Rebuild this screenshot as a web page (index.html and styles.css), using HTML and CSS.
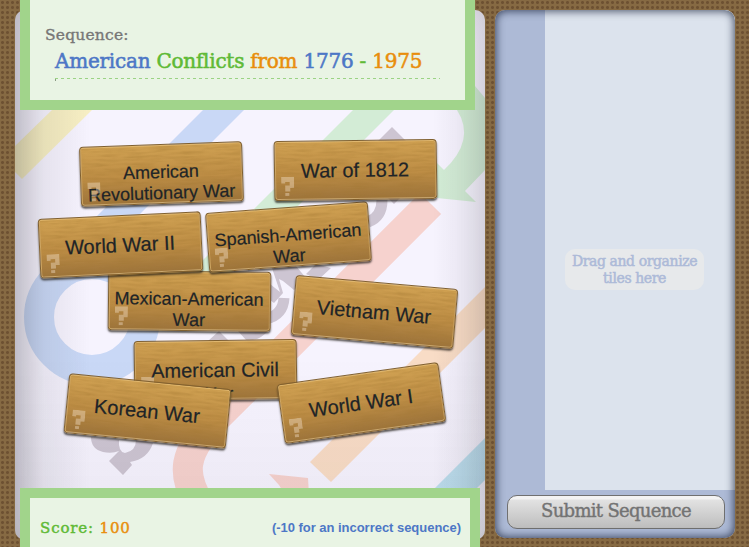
FILE: index.html
```
<!DOCTYPE html>
<html lang="en">
<head>
<meta charset="utf-8">
<title>American Conflicts from 1776 - 1975</title>
<link rel="stylesheet" href="styles.css">
</head>
<body>
<svg class="defs" width="0" height="0" aria-hidden="true">
  <filter id="grain" x="0" y="0" width="100%" height="100%">
    <feTurbulence type="fractalNoise" baseFrequency="0.04 0.4" numOctaves="4" seed="4"/>
    <feColorMatrix values="0 0 0 0 0.35  0 0 0 0 0.18  0 0 0 0 0.03  1.4 0 0 0 -0.5"/>
  </filter>
  <symbol id="wood" viewBox="0 0 163 60" preserveAspectRatio="none"><rect width="163" height="60" filter="url(#grain)"/></symbol>
  <symbol id="hint" viewBox="0 0 13 19"><path d="M0 0H13V11H9V14.5H4V8.5H8.5V5H4V6.5H0ZM4 16H8V19H4Z"/></symbol>
</svg>
<main class="app">
  <section class="play">
    <svg class="art" viewBox="15 11 470 528" aria-hidden="true">
      <path fill="#f7efc4" d="M52 110H92L22 179L15 172V146Z"/>
      <path fill="#c9d8f6" d="M203 110H244L90 264H49Z"/>
      <circle cx="92" cy="317" r="53" fill="none" stroke="#c9d8f6" stroke-width="30"/>
      <path fill="#d3ecd6" d="M353 110H394L220 284H179Z"/>
      <path fill="#d3ecd6" d="M440 86H475L485 98V170L465 191L476 202L437 198V163L444 170Q476 140 457 110Z"/>
      <g fill="#cdc5d2">
        <path d="M392 127L409 144L397 156L375 144ZM386 196H402L394 204Z"/>
        <path d="M91 437Q91 449 103 452Q112 454 119 451L109 461L123 475L132 465L130 462Q148 459 153 443L136 440Q136 451 125 453Q118 452 119 440Z"/>
        <path d="M316 264L331 268L318 280L306 274ZM272 268L296 266L306 278L294 290L283 281L279 279L283 293L274 303L270 300V284L280 292Z"/>
        <path d="M208 341L219 331L229 341ZM238 331H268Q258 342 246 340Z"/>
      </g>
      <g fill="none" stroke="#cdc5d2" stroke-width="11">
        <path d="M382 200Q382 217 368 222"/><path d="M284 298Q283 315 266 319"/>
      </g>
      <path fill="none" stroke="#f6d2ce" stroke-width="30" d="M430.5 203.5L220 414C180 454 182 475 200 505"/>
      <path fill="#f6d2ce" d="M269 474L308 478L309 495H285L279 485Z"/>
      <path fill="#f8dcc6" d="M485 287V328L331 482L310 462Z"/>
      <path fill="#bfe0f0" d="M485 438V480L477 488H435Z"/>
    </svg>
    <header class="title">
      <div class="label">Sequence:</div>
      <h1><span class="blue">American</span> <span class="green">Conflicts</span> <span class="orange">from</span> <span class="blue">1776</span> <span class="green">-</span> <span class="orange">1975</span></h1>
      <div class="rule"></div>
    </header>
    <div class="board">
      <div class="tile two mexican"><svg class="wood"><use href="#wood"/></svg><span>Mexican-American War</span><svg class="hint"><use href="#hint"/></svg></div>
      <div class="tile two spanish"><svg class="wood"><use href="#wood"/></svg><span>Spanish-American War</span><svg class="hint"><use href="#hint"/></svg></div>
      <div class="tile two revolution"><svg class="wood"><use href="#wood"/></svg><span>American Revolutionary War</span><svg class="hint"><use href="#hint"/></svg></div>
      <div class="tile w1812"><svg class="wood"><use href="#wood"/></svg><span>War of 1812</span><svg class="hint"><use href="#hint"/></svg></div>
      <div class="tile ww2"><svg class="wood"><use href="#wood"/></svg><span>World War II</span><svg class="hint"><use href="#hint"/></svg></div>
      <div class="tile vietnam"><svg class="wood"><use href="#wood"/></svg><span>Vietnam War</span><svg class="hint"><use href="#hint"/></svg></div>
      <div class="tile two civil"><svg class="wood"><use href="#wood"/></svg><span>American Civil War</span><svg class="hint"><use href="#hint"/></svg></div>
      <div class="tile korean"><svg class="wood"><use href="#wood"/></svg><span>Korean War</span><svg class="hint"><use href="#hint"/></svg></div>
      <div class="tile ww1"><svg class="wood"><use href="#wood"/></svg><span>World War I</span><svg class="hint"><use href="#hint"/></svg></div>
    </div>
    <footer class="score">
      <div class="points"><span class="green">Score:</span> <span class="orange">100</span></div>
      <div class="penalty">(-10 for an incorrect sequence)</div>
    </footer>
  </section>
  <aside class="tray">
    <div class="drop"><p>Drag and organize<br>tiles here</p></div>
    <button type="button">Submit Sequence</button>
  </aside>
</main>
</body>
</html>
```
FILE: styles.css
```
* { box-sizing: border-box; }
body {
  margin: 0;
  width: 749px;
  height: 547px;
  overflow: hidden;
  font-family: "DejaVu Serif", serif;
  background-color: #866a43;
  background-image: radial-gradient(circle at 2.5px 2.5px, #6d5132 1px, transparent 2px);
  background-size: 5px 5px;
}
.defs { position: absolute; }
.blue { color: #4d77c6; }
.green { color: #5fba36; }
.orange { color: #e88e0c; }

.app { display: flex; gap: 10px; height: 547px; padding-left: 15px; }

.play { position: relative; width: 470px; display: flex; flex-direction: column; }
.play::before, .play::after {
  content: "";
  position: absolute;
  inset: 10px 0 7px;
  border-radius: 10px;
  background: #f6f3fe;
}
.play::after {
  background: linear-gradient(90deg, rgba(20,18,25,.18), rgba(20,18,25,.07) 6%, transparent 16%, transparent 89%, rgba(20,18,25,.09)),
    linear-gradient(transparent 65%, rgba(20,18,25,.05));
  box-shadow: inset 0 0 32px rgba(20,18,25,.12);
}
.art { position: absolute; left: 0; top: 11px; width: 470px; height: 528px; }

.title {
  position: relative;
  z-index: 1;
  width: 455px;
  height: 110px;
  margin-left: 5px;
  padding: 25px 25px 0 15px;
  background: #e9f4e4;
  border: 10px solid #a1d48b;
  border-top: 0;
}
.label {
  font-size: 15.5px;
  line-height: 20px;
  letter-spacing: .2px;
  color: #777;
  -webkit-text-stroke: .35px;
}
h1 {
  margin: 2px 0 0 10px;
  font-size: 20px;
  font-weight: 400;
  line-height: 28px;
  letter-spacing: -.24px;
  white-space: nowrap;
  -webkit-text-stroke: .55px;
}
.rule {
  height: 4px;
  margin: 3px 0 0 10px;
  background: linear-gradient(#8a9a84, #8a9a84) 0 1px / 1px 2px no-repeat,
    repeating-linear-gradient(90deg, #9bd384 0 3px, transparent 3px 6px) 0 0 / 100% 1px no-repeat;
}

.board { position: relative; z-index: 2; height: 378px; }
.tile {
  position: absolute;
  width: 163px;
  height: 60px;
  display: flex;
  align-items: center;
  justify-content: center;
  border: 1px solid #80602f;
  border-radius: 4px;
  background: linear-gradient(#d0a152, #bd8d45 55%, #9c733b);
  box-shadow: inset 0 1px #e0b870, inset 1px 0 #cda562, inset -1px 0 #c49b59, inset 0 -1px #cba970, 0 2px 2px rgba(30,25,20,.7);
  color: #202427;
  font: 20px/21px "Liberation Sans", Arial, sans-serif;
  text-align: center;
}
.tile span { position: relative; left: -.5px; -webkit-text-stroke: .2px; }
.two { align-items: flex-start; padding-top: 17px; font-size: 18px; line-height: 20.5px; }
.wood { position: absolute; inset: 1px; width: 159px; height: 56px; opacity: .5; }
.hint { position: absolute; left: 5.5px; top: 35px; width: 13px; height: 19px; fill: #fff0e0; opacity: .36; }
.revolution { left: 64.5px; top: 34px; transform: rotate(-2deg); }
.w1812 { left: 258.5px; top: 30px; transform: rotate(-.8deg); }
.spanish { left: 191.5px; top: 96.5px; transform: rotate(-4.2deg); }
.ww2 { left: 23.5px; top: 105px; transform: rotate(-2.7deg); }
.mexican { left: 92.5px; top: 161px; transform: rotate(.6deg); }
.vietnam { left: 277.5px; top: 172px; transform: rotate(5deg); }
.civil { left: 118.5px; top: 230px; transform: rotate(-.8deg); font-size: 20px; line-height: 24px; padding: 17px 10px 0; }
.korean { left: 50.5px; top: 270.5px; transform: rotate(5.7deg); }
.ww1 { left: 265px; top: 263px; transform: rotate(-8deg); }

.score {
  position: relative;
  z-index: 3;
  width: 460px;
  height: 59px;
  margin-left: 5px;
  padding: 20px 9px 0 10px;
  display: flex;
  justify-content: space-between;
  background: #e9f4e4;
  border: 10px solid #a1d48b;
  border-bottom: 0;
}
.points { font-size: 15px; line-height: 20px; letter-spacing: .85px; -webkit-text-stroke: .45px; }
.penalty { font: bold 13px/20px "Liberation Sans", Arial, sans-serif; letter-spacing: -.03px; color: #4d77c6; }

.tray {
  position: relative;
  width: 240px;
  height: 528px;
  margin-top: 10px;
  overflow: hidden;
  border-radius: 10px;
  background: #adbad6;
}
.tray::after {
  content: "";
  position: absolute;
  inset: 0;
  border-radius: 10px;
  box-shadow: inset 0 0 8px 1px rgba(25,35,60,.8);
  pointer-events: none;
}
.drop {
  height: 480px;
  margin-left: 50px;
  padding: 239px 0 0 20px;
  background: #dce3ed;
}
.drop p {
  width: 139px;
  height: 41px;
  margin: 0;
  padding-top: 4px;
  border-radius: 10px;
  background: #e7e9eb;
  color: #adbad8;
  font-size: 14px;
  line-height: 17px;
  letter-spacing: -.4px;
  text-align: center;
  white-space: nowrap;
  -webkit-text-stroke: .5px;
}
button {
  display: block;
  width: 218px;
  height: 34px;
  margin: 5px 0 0 12px;
  padding: 0 0 2px;
  border: 1px solid #707070;
  border-radius: 10px;
  background: linear-gradient(#f3f3f3 0 3px, #e2e2e2 4px, #bdbdbd);
  color: #737373;
  font: 18px/28px "DejaVu Serif", serif;
  letter-spacing: -.7px;
  -webkit-text-stroke: .4px;
}
```
